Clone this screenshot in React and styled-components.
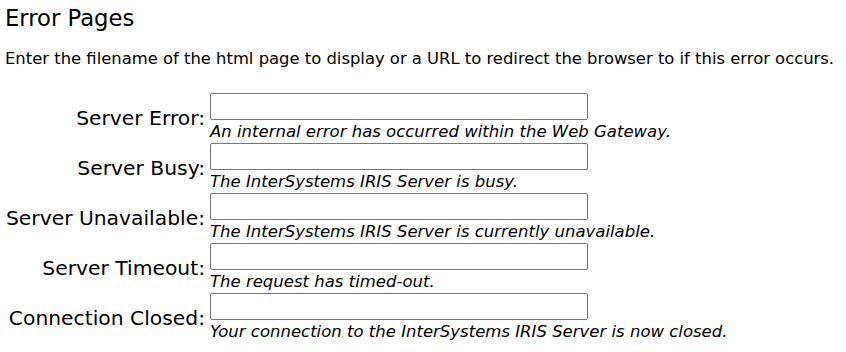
import React from 'react';
import styled, { createGlobalStyle } from 'styled-components';

const GlobalStyle = createGlobalStyle`
    body {
        margin: 0;
        background: #ffffff;
        font-family: "DejaVu Sans", Verdana, sans-serif;
        color: #000000;
    }
`;

const Page = styled.div`
    padding: 4px 5px;
`;

const Title = styled.h2`
    margin: 0;
    font-size: 22.7px;
    font-weight: normal;
    line-height: 28px;
`;

const Intro = styled.p`
    margin: 17px 0 24px 0;
    font-size: 16.4px;
    line-height: 20px;
    white-space: nowrap;
`;

const FormGrid = styled.div`
    display: grid;
    grid-template-columns: 200px auto;
    column-gap: 5px;
`;

const Label = styled.label`
    display: flex;
    align-items: center;
    justify-content: flex-end;
    font-size: 20.3px;
    height: 50px;
    white-space: nowrap;
`;

const Field = styled.div`
    display: flex;
    flex-direction: column;
    height: 50px;
`;

const TextInput = styled.input`
    box-sizing: border-box;
    width: 378px;
    height: 27px;
    border: 1px solid #767676;
    border-radius: 2px;
    padding: 2px 4px;
    font-family: inherit;
    font-size: 15px;
`;

const Hint = styled.span`
    font-style: italic;
    font-size: 16.5px;
    line-height: 23px;
    white-space: nowrap;
`;

const rows = [
    { label: 'Server Error:', hint: 'An internal error has occurred within the Web Gateway.' },
    { label: 'Server Busy:', hint: 'The InterSystems IRIS Server is busy.' },
    { label: 'Server Unavailable:', hint: 'The InterSystems IRIS Server is currently unavailable.' },
    { label: 'Server Timeout:', hint: 'The request has timed-out.' },
    { label: 'Connection Closed:', hint: 'Your connection to the InterSystems IRIS Server is now closed.' },
];

const App = () => {
    return (
        <>
            <GlobalStyle />
            <Page>
                <Title>Error Pages</Title>
                <Intro>Enter the filename of the html page to display or a URL to redirect the browser to if this error occurs.</Intro>
                <FormGrid>
                    {rows.map((r) => (
                        <React.Fragment key={r.label}>
                            <Label>{r.label}</Label>
                            <Field>
                                <TextInput type="text" />
                                <Hint>{r.hint}</Hint>
                            </Field>
                        </React.Fragment>
                    ))}
                </FormGrid>
            </Page>
        </>
    );
};

export default App;
